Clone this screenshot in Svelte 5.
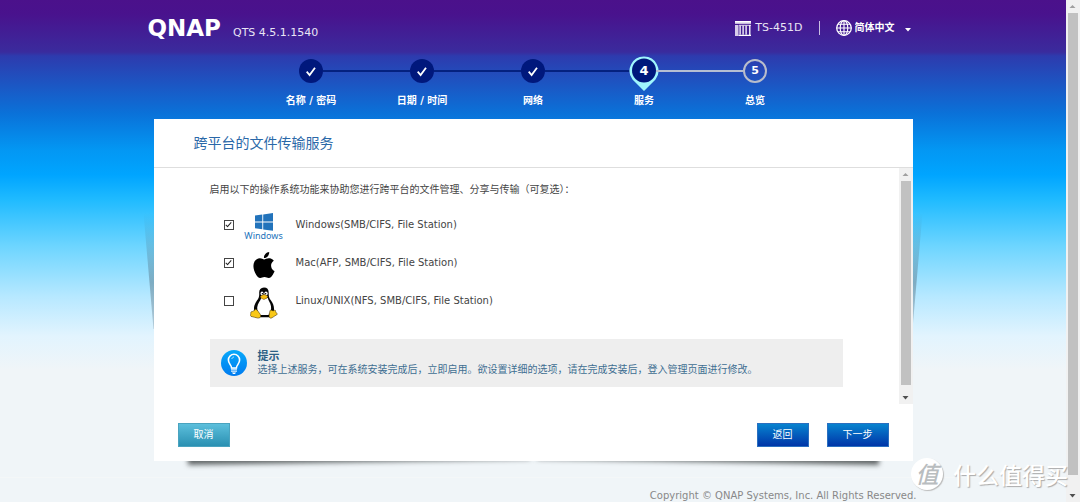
<script lang="ts">
  type Step = { label: string; state: 'done' | 'current' | 'next' };
  type Service = { id: 'windows' | 'mac' | 'linux'; label: string; checked: boolean };

  const steps: Step[] = [
    { label: '名称 / 密码', state: 'done' },
    { label: '日期 / 时间', state: 'done' },
    { label: '网络', state: 'done' },
    { label: '服务', state: 'current' },
    { label: '总览', state: 'next' }
  ];

  let services: Service[] = $state([
    { id: 'windows', label: 'Windows(SMB/CIFS, File Station)', checked: true },
    { id: 'mac', label: 'Mac(AFP, SMB/CIFS, File Station)', checked: true },
    { id: 'linux', label: 'Linux/UNIX(NFS, SMB/CIFS, File Station)', checked: false }
  ]);

  let language = $state('zh-CN');
</script>

{#snippet scrollbar(name: string)}
  <div class="scrollbar {name}" aria-hidden="true">
    <svg class="scroll-arrow" viewBox="0 0 13 13"><path d="M3.5 8h6L6.500 5z" fill="#a0a0a0" /></svg>
    <div class="scroll-track"><div class="scroll-thumb"></div></div>
    <svg class="scroll-arrow" viewBox="0 0 13 13"><path d="M3.500 5h6l-3 3.500z" fill="#505050" /></svg>
  </div>
{/snippet}

<div class="page">
  <div class="main">
    <header class="header">
      <div class="brand">
        <span class="logo">QNAP</span>
        <span class="version">QTS 4.5.1.1540</span>
      </div>
      <div class="tools">
        <svg class="nas-icon" viewBox="0 0 16 15">
          <path d="M0 0h16v3H0z" fill="#fff" />
          <path d="M0 2.200h16" stroke="#9a82c4" stroke-width="0.800" />
          <path d="M0 4h3.500v11H0z" fill="#d8cdea" />
          <path d="M5.100 4.500v9M8.100 4.500v9M11.100 4.500v9M14.800 4v11M3.500 14.300H16" fill="none" stroke="#fff" stroke-width="1.300" />
          <path d="M4 4.300h12" stroke="#fff" stroke-width="0.800" />
        </svg>
        <span class="model">TS-451D</span>
        <span class="divider"></span>
        <svg class="globe-icon" viewBox="0 0 16 16" fill="none" stroke="#fff">
          <circle cx="8" cy="8" r="7.300" stroke-width="1.300" />
          <ellipse cx="8" cy="8" rx="3.800" ry="7.300" stroke-width="1.100" />
          <path d="M8 .7v14.600M.7 8h14.600M2 4.300h12M2 11.700h12" stroke-width="1.100" />
        </svg>
        <div class="language">
          <select bind:value={language} aria-label="语言">
            <option value="zh-CN">简体中文</option>
          </select>
          <svg class="caret" viewBox="0 0 6 4"><path d="M0 0h6L3 3.500z" fill="#fff" /></svg>
        </div>
      </div>
    </header>

    <ol class="steps">
      {#each steps as step, i}
        <li class="step {step.state}">
          <div class="marker">
            {#if step.state === 'done'}
              <svg class="tick" viewBox="0 0 24 24">
                <path d="M7.700 12.700l2.900 3.300 5.400-7.300" fill="none" stroke="#fff" stroke-width="1.800" />
              </svg>
            {:else if step.state === 'current'}
              <svg class="pin" viewBox="0 0 30 36">
                <path d="M15 0.500a14.300 14.300 0 0 0-11.500 23L15 35l11.500-11.500A14.300 14.300 0 0 0 15 .5z" fill="#9ff6fd" />
                <circle cx="15" cy="14.500" r="12" fill="#00187c" />
              </svg>
              <span class="number">{i + 1}</span>
            {:else}
              <span class="number">{i + 1}</span>
            {/if}
          </div>
          <span class="step-label">{step.label}</span>
        </li>
      {/each}
    </ol>

    <div class="card-wrap">
      <main class="card">
        <h1>跨平台的文件传输服务</h1>
        <div class="body">
          <div class="content">
            <p class="intro">启用以下的操作系统功能来协助您进行跨平台的文件管理、分享与传输（可复选）：</p>

            <div class="services">
              {#each services as service}
                <label class="service">
                  <input type="checkbox" bind:checked={service.checked} />
                  <span class="os">
                    {#if service.id === 'windows'}
                      <svg class="win-icon" viewBox="0 0 18 18" fill="#2273bb">
                        <path d="M0 2.600L7.300 1.600V8.500H0zM8.200 1.400L18 0v8.500H8.200zM0 9.400h7.300v6.900L0 15.300zM8.200 9.400H18v8.400l-9.800-1.400z" />
                      </svg>
                      <span class="win-name">Windows</span>
                    {:else if service.id === 'mac'}
                      <svg class="mac-icon" viewBox="0 0 24 24">
                        <path d="M12.152 6.896c-.948 0-2.415-1.078-3.960-1.040-2.040.027-3.910 1.183-4.961 3.014-2.117 3.675-.546 9.103 1.519 12.090 1.013 1.454 2.208 3.090 3.792 3.039 1.520-.065 2.090-.987 3.935-.987 1.831 0 2.350.987 3.960.948 1.637-.026 2.676-1.480 3.676-2.948 1.156-1.688 1.636-3.325 1.662-3.415-.039-.013-3.182-1.221-3.220-4.857-.026-3.040 2.480-4.494 2.597-4.559-1.429-2.090-3.623-2.324-4.390-2.376-2-.156-3.675 1.090-4.610 1.090zM15.530 3.830c.843-1.012 1.400-2.427 1.245-3.830-1.207.052-2.662.805-3.532 1.818-.780.896-1.454 2.338-1.273 3.714 1.338.104 2.715-.688 3.559-1.701" />
                      </svg>
                    {:else}
                      <svg class="tux-icon" viewBox="0 0 28 32">
                        <path d="M14 .5c-3.400 0-5 2.400-4.800 5.500.2 3.400-.4 5-2.400 7.800-2.200 3.200-3.400 6.800-2.600 10.400l4 6h12l3.600-5.600c.8-4-.4-7.800-2.800-11-1.800-2.400-2.400-4.200-2.300-7.600C18.800 2.500 17.200.5 14 .5z" fill="#050505" />
                        <path d="M11.200 11c-.5 2.400-3.600 5.200-4 9.200-.3 3.200 1.300 5.800 3 7.800h8.300c2-2.400 3-5.400 2.500-8.800-.5-3.300-2.800-5.600-3.300-8.400L14 12.500z" fill="#fff" />
                        <ellipse cx="12" cy="6.500" rx="1.500" ry="2" fill="#fff" />
                        <ellipse cx="16" cy="6.500" rx="1.700" ry="2.100" fill="#fff" />
                        <circle cx="12.400" cy="6.800" r=".8" />
                        <circle cx="15.600" cy="6.800" r=".8" />
                        <path d="M10.300 9.700c1-1 2.400-2.100 3.700-2 1.400 0 3 1 3.800 1.700-.6 1.500-2.300 2.700-4 2.800-1.500 0-2.700-1.300-3.500-2.500z" fill="#f7be10" stroke="#8a5b00" stroke-width=".4" />
                        <path d="M5.500 22.200c1.600.2 3.200 3 4.600 4.900 1.400 2.100.4 4-2.300 4-2.300-.4-4.500-1.300-6.800-1.700-1.100-.8 0-2.300-.2-3.900 0-1.200 2-.7 2.900-1.500.7-.7.8-1.600 1.800-1.800z" fill="#f9c817" stroke="#302000" stroke-width=".5" />
                        <path d="M20 23.700c.4-1 1.500-.6 2.200-.2 1 .5 2 .2 2.700-.5.9.2.5 1.700 1 2.300.6.9 1.500 1.200 1.400 2-1.700 1.500-3.500 2-5.200 3.400-1.300 1-2.800.3-3-1.200-.2-2 .5-3.800.9-5.800z" fill="#f9c817" stroke="#302000" stroke-width=".5" />
                      </svg>
                    {/if}
                  </span>
                  <span>{service.label}</span>
                </label>
              {/each}
            </div>

            <div class="tip">
              <svg class="bulb-icon" viewBox="0 0 26 26">
                <defs>
                  <linearGradient id="bulb" x1="0" y1="0" x2="0" y2="1">
                    <stop offset="0" stop-color="#08a9fa" />
                    <stop offset="1" stop-color="#007bef" />
                  </linearGradient>
                </defs>
                <circle cx="13" cy="13" r="13" fill="url(#bulb)" />
                <path d="M10.600 18c0-3-3.200-4-3.200-8 0-3.200 2.400-5.700 5.600-5.700s5.600 2.500 5.600 5.700c0 4-3.200 5-3.200 8z" fill="none" stroke="#fff" stroke-width="1.600" />
                <path d="M10.800 9c.3-1.100 1.100-1.900 2.200-2" fill="none" stroke="#b8e4ff" stroke-width="1" />
                <path d="M10 19.200h6M10 21.200h6" stroke="#e4f4ff" stroke-width="1.200" />
                <path d="M11 22.500h4l-1 1.400h-2z" fill="#fff" />
              </svg>
              <div>
                <strong>提示</strong>
                <p>选择上述服务，可在系统安装完成后，立即启用。欲设置详细的选项，请在完成安装后，登入管理页面进行修改。</p>
              </div>
            </div>
          </div>
          {@render scrollbar('inner')}
        </div>

        <div class="actions">
          <button type="button" class="cancel">取消</button>
          <button type="button" class="back">返回</button>
          <button type="button" class="next">下一步</button>
        </div>
      </main>
    </div>

    <footer>
      <p>Copyright © QNAP Systems, Inc. All Rights Reserved.</p>
    </footer>
  </div>

  {@render scrollbar('outer')}

  <div class="watermark">
    <span class="seal">值</span>
    <span>什么值得买</span>
  </div>
</div>

<style>
  :global(body) {
    margin: 0;
  }

  .page {
    position: relative;
    display: flex;
    min-height: 100vh;
    overflow: hidden;
    font-family: 'DejaVu Sans', 'Noto Sans CJK SC', sans-serif;
    font-size: 10px;
    line-height: 14px;
    color: #444;
    background: #f0f5f8;
  }

  .main {
    flex: 1;
    min-width: 0;
    display: flex;
    flex-direction: column;
    background: linear-gradient(
      #4b118b 0,
      #49128d 14px,
      #3a2b9d 52px,
      #2d3bae 56px,
      #0a72d9 114px,
      #0397f3 150px,
      #00a5ff 175px,
      #20bbff 200px,
      #6dd5ff 246px,
      #b6e8ff 296px,
      #e2f4fe 336px,
      #f0f5f8 370px
    );
  }

  p,
  h1,
  ol {
    margin: 0;
    padding: 0;
  }

  svg {
    display: block;
    flex-shrink: 0;
  }

  /* Header */
  .header {
    display: flex;
    justify-content: space-between;
    box-sizing: border-box;
    width: 100%;
    max-width: 771px;
    height: 59px;
    margin: 0 auto;
    padding: 16px 8px 0 0;
    color: #e9e4f4;
    font-size: 11px;
  }

  .brand {
    display: flex;
    align-items: baseline;
    height: 24px;
    gap: 12px;
    line-height: 24px;
  }

  .logo {
    font-size: 23px;
    font-weight: bold;
    color: #fff;
  }

  .tools {
    display: flex;
    align-items: center;
    height: 24px;
  }

  .nas-icon {
    width: 16px;
    height: 15px;
    margin-right: 4px;
  }

  .divider {
    width: 1px;
    height: 14px;
    margin: 0 16px;
    background: #c9bfe2;
  }

  .globe-icon {
    width: 16px;
    height: 16px;
    margin-right: 3px;
  }

  .language {
    position: relative;
  }

  .language select {
    appearance: none;
    display: block;
    margin: 0;
    padding: 0 16px 0 0;
    border: 0;
    background: none;
    color: #fff;
    font: bold 10px/14px 'DejaVu Sans', 'Noto Sans CJK SC', sans-serif;
  }

  .language option {
    color: #333;
  }

  .caret {
    position: absolute;
    right: 0;
    top: 7px;
    width: 6px;
    height: 4px;
    pointer-events: none;
  }

  /* Steps */
  .steps {
    display: grid;
    grid-template-columns: repeat(5, 1fr);
    width: 100%;
    max-width: 555px;
    margin: 0 auto;
    list-style: none;
    color: #fff;
    font-weight: bold;
  }

  .step {
    position: relative;
    display: flex;
    flex-direction: column;
    align-items: center;
    gap: 11px;
  }

  /* connector to the previous step */
  .step + .step::before {
    content: '';
    position: absolute;
    top: 11px;
    right: calc(50% + 12px);
    width: calc(100% - 24px);
    height: 2px;
    background: #04217f;
  }

  .step.next::before {
    background: #b5bed2;
  }

  .marker {
    position: relative;
    display: flex;
    align-items: center;
    justify-content: center;
    box-sizing: border-box;
    width: 24px;
    height: 24px;
    border-radius: 50%;
  }

  .done .marker {
    background: #00187c;
  }

  .next .marker {
    border: 2px solid #b9bdcb;
  }

  .tick {
    width: 24px;
    height: 24px;
  }

  .pin {
    position: absolute;
    top: -3px;
    left: -3px;
    width: 30px;
    height: 36px;
  }

  .number {
    position: relative;
    font-size: 11px;
  }

  .current .number {
    font-size: 13px;
  }

  .step-label {
    white-space: nowrap;
  }

  /* Card */
  .card-wrap {
    position: relative;
    z-index: 0;
    width: 100%;
    max-width: 759px;
    margin: 11px auto 0;
  }

  /* side shadows */
  .card-wrap::before {
    content: '';
    position: absolute;
    z-index: -1;
    top: 94px;
    left: -10px;
    right: -10px;
    height: 116px;
    background: linear-gradient(rgba(70, 90, 105, 0) 0, rgba(70, 90, 105, 0.4) 60%, rgba(70, 90, 105, 0.25));
    clip-path: polygon(0 0, 100% 0, calc(100% - 10px) 100%, 10px 100%);
  }

  .card {
    background: #fff;
  }

  /* lifted bottom corners */
  .card::before,
  .card::after {
    content: '';
    position: absolute;
    z-index: -1;
    bottom: 0;
    left: 34px;
    width: 45%;
    height: 20px;
    box-shadow: 0 4px 5px rgba(50, 55, 55, 0.75);
    transform: rotate(-1deg);
    transform-origin: 0 100%;
  }

  .card::after {
    left: auto;
    right: 34px;
    transform: rotate(1deg);
    transform-origin: 100% 100%;
  }

  h1 {
    padding: 14px 40px;
    border-bottom: 1px solid #dedede;
    font-size: 14px;
    line-height: 20px;
    font-weight: normal;
    color: #2a68a8;
  }

  .body {
    display: flex;
  }

  .content {
    flex: 1;
    min-width: 0;
    padding: 15px 56px 17px;
  }

  .services {
    padding: 9px 0 19px;
  }

  .service {
    display: flex;
    align-items: center;
    height: 38px;
    padding-left: 14px;
  }

  .service input {
    appearance: none;
    position: relative;
    flex-shrink: 0;
    box-sizing: border-box;
    width: 10px;
    height: 10px;
    margin: 0;
    border: 1px solid #444;
    background: #fff;
  }

  .service input:checked::before {
    content: '';
    position: absolute;
    left: 2px;
    top: 0;
    width: 2px;
    height: 5px;
    border: solid #222;
    border-width: 0 1px 1px 0;
    transform: rotate(42deg);
  }

  .os {
    display: flex;
    flex-direction: column;
    align-items: center;
    width: 40px;
    margin: 0 12px 0 10px;
    padding-top: 3px;
  }

  .win-icon {
    width: 18px;
    height: 18px;
  }

  .win-name {
    font-family: 'Noto Sans', sans-serif;
    font-size: 9px;
    line-height: 10px;
    color: #2273bb;
  }

  .mac-icon {
    width: 26px;
    height: 26px;
  }

  .tux-icon {
    width: 28px;
    height: 32px;
  }

  .tip {
    display: flex;
    align-items: center;
    gap: 11px;
    padding: 11px;
    background: #eee;
    color: #3f6f92;
    line-height: 13px;
  }

  .tip strong {
    display: block;
    font-size: 11px;
    color: #2b5f85;
  }

  .bulb-icon {
    width: 26px;
    height: 26px;
  }

  /* Buttons */
  .actions {
    display: flex;
    padding: 19px 24px 14px;
  }

  .actions button {
    height: 24px;
    min-width: 52px;
    padding: 0 15px;
    border: 1px solid #2a6fc0;
    border-radius: 0;
    color: #fff;
    font: 10px/14px 'DejaVu Sans', 'Noto Sans CJK SC', sans-serif;
    background: linear-gradient(#0783cf, #0035a8);
  }

  .actions .cancel {
    margin-right: auto;
    border-color: #4aa3bf;
    background: linear-gradient(#5cbfdc, #2a90b2);
  }

  .actions .next {
    min-width: 62px;
    margin-left: 18px;
  }

  /* Footer */
  footer {
    box-sizing: border-box;
    width: 100%;
    margin-top: 16px;
    padding: 11px 0 0;
    border-top: 1px solid #f4f7f8;
    color: #888;
    text-align: right;
  }

  footer p {
    max-width: 767px;
    height: 13px;
    margin: 0 auto;
  }

  /* Scrollbars */
  .scrollbar {
    display: flex;
    flex-direction: column;
    box-sizing: border-box;
    width: 14px;
    background: #f1f1f1;
  }

  .scroll-arrow {
    width: 13px;
    height: 13px;
  }

  .scroll-track {
    flex: 1;
    padding: 0 2px;
  }

  .scroll-thumb {
    height: 97%;
    background: #c1c1c1;
  }

  /* Watermark */
  .watermark {
    position: absolute;
    right: 12px;
    bottom: 11px;
    display: flex;
    align-items: center;
    gap: 10px;
    color: #fff;
    font-family: 'Noto Sans CJK SC', sans-serif;
    font-size: 23px;
    font-weight: 500;
    line-height: 34px;
    text-shadow: 1px 1px 1px #aaa;
    pointer-events: none;
  }

  .seal {
    width: 32px;
    height: 32px;
    border-radius: 50%;
    background: #fff;
    box-shadow: 1px 1px 1px #bbb;
    color: #b9bdbf;
    font-style: italic;
    line-height: 30px;
    text-align: center;
    text-shadow: none;
  }
</style>
